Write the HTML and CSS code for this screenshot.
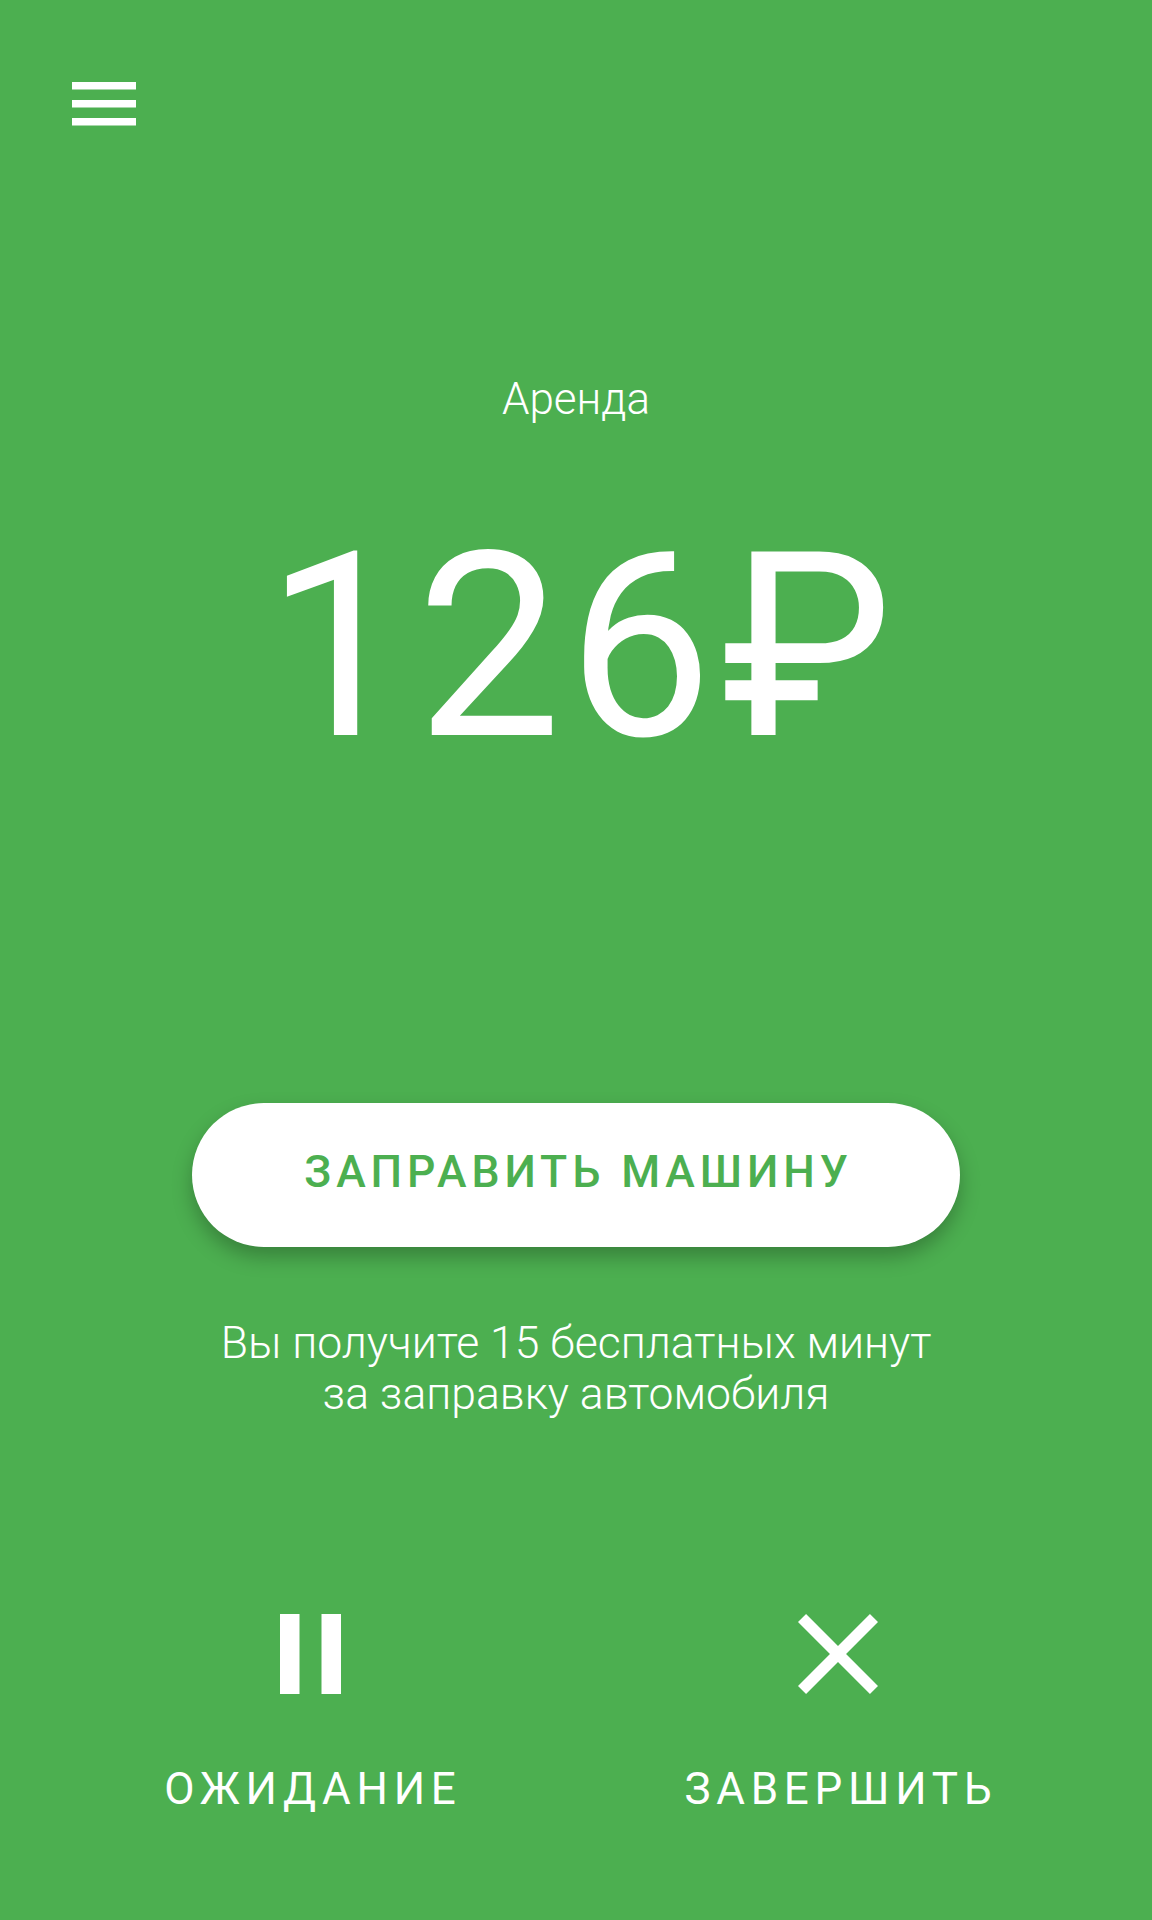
FILE: index.html
```html
<!DOCTYPE html>
<html lang="ru">
<head>
<meta charset="utf-8">
<title>Аренда</title>
<link rel="stylesheet" href="styles.css">
</head>
<body>
<div class="screen">
  <header class="topbar">
    <button class="menu-btn" aria-label="Меню">
      <svg class="menu-icon" viewBox="0 0 64 44" width="64" height="44">
        <rect x="0" y="0" width="64" height="7.5" fill="#fff"/>
        <rect x="0" y="18" width="64" height="7.5" fill="#fff"/>
        <rect x="0" y="36" width="64" height="7.5" fill="#fff"/>
      </svg>
    </button>
  </header>

  <main class="content">
    <div class="caption">Аренда</div>
    <div class="price">126<span class="currency">₽</span></div>
    <button class="refuel">ЗАПРАВИТЬ МАШИНУ</button>
    <p class="hint">Вы получите 15 бесплатных минут<br>за заправку автомобиля</p>
  </main>

  <footer class="actions">
    <div class="action">
      <svg class="action-icon" viewBox="0 0 61 80" width="61" height="80">
        <rect x="0" y="0" width="19.5" height="80" fill="#fff"/>
        <rect x="41.5" y="0" width="19.5" height="80" fill="#fff"/>
      </svg>
      <span class="action-label">ОЖИДАНИЕ</span>
    </div>
    <div class="action">
      <svg class="action-icon" viewBox="5 5 14 14" width="80" height="80">
        <path fill="#fff" d="M19 6.41L17.59 5 12 10.59 6.41 5 5 6.41 10.59 12 5 17.59 6.41 19 12 13.41 17.59 19 19 17.59 13.41 12z"/>
      </svg>
      <span class="action-label">ЗАВЕРШИТЬ</span>
    </div>
  </footer>
</div>
</body>
</html>
```

FILE: styles.css
```css
* {
  box-sizing: border-box;
}

html, body {
  margin: 0;
  padding: 0;
}

body {
  background: #4caf50;
  font-family: Roboto, "Noto Sans", "Liberation Sans", sans-serif;
  color: #fff;
}

.screen {
  width: 1152px;
  height: 1920px;
  display: flex;
  flex-direction: column;
  background: #4caf50;
  overflow: hidden;
}

.topbar {
  height: 140px;
  padding: 82px 0 0 72px;
}

.menu-btn {
  display: block;
  border: 0;
  padding: 0;
  margin: 0;
  background: none;
  width: 64px;
  height: 44px;
}

.menu-icon {
  display: block;
}

.content {
  display: flex;
  flex-direction: column;
  align-items: center;
}

.caption {
  margin-top: 234px;
  font-size: 44px;
  line-height: 51px;
  font-weight: 300;
}

.price {
  margin-top: 93px;
  font-size: 258px;
  line-height: 258px;
  font-weight: 400;
  white-space: nowrap;
  letter-spacing: 6px;
  padding-left: 6px;
}

.currency {
  margin-left: 3px;
  letter-spacing: 0;
}

.refuel {
  margin-top: 327px;
  width: 768px;
  height: 144px;
  border: 0;
  border-radius: 72px;
  background: #fff;
  color: #4caf50;
  font-family: Roboto, "Noto Sans", "Liberation Sans", sans-serif;
  font-size: 44.5px;
  font-weight: 500;
  letter-spacing: 0.11em;
  padding: 0 0 6px 0.11em;
  display: flex;
  align-items: center;
  justify-content: center;
  box-shadow: 0 10px 20px rgba(0, 0, 0, 0.26);
}

.hint {
  margin: 71px 0 0;
  font-size: 44.5px;
  line-height: 51px;
  font-weight: 300;
  text-align: center;
}

.actions {
  margin-top: 194px;
  padding: 0 50px 0 46px;
  display: grid;
  grid-template-columns: 1fr 1fr;
}

.action {
  display: flex;
  flex-direction: column;
  align-items: center;
}

.action-icon {
  display: block;
}

.action-label {
  margin-top: 69px;
  font-size: 44px;
  line-height: 52px;
  font-weight: 400;
  letter-spacing: 0.13em;
  padding-left: 0.13em;
}
```
